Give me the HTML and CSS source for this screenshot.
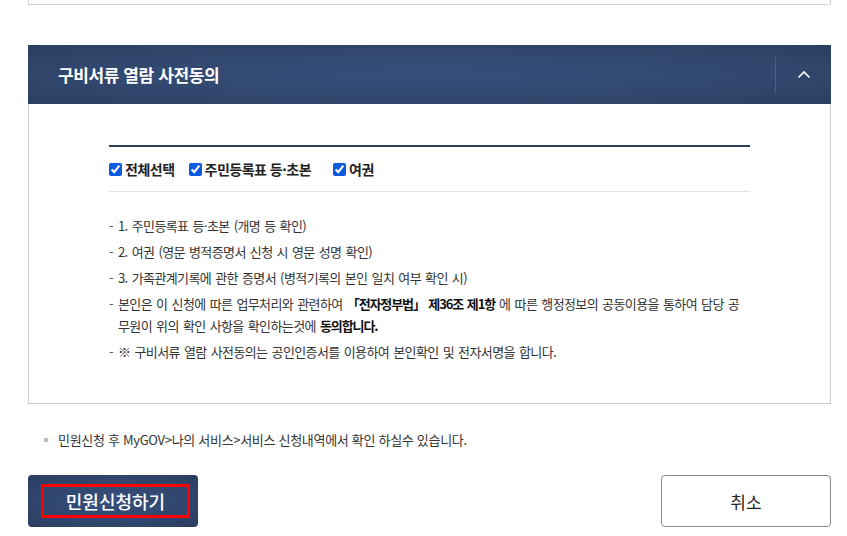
FILE: index.html
```html
<!DOCTYPE html>
<html lang="ko">

<head>
    <meta charset="UTF-8">
    <meta name="viewport" content="width=device-width, initial-scale=1.0">
    <title>구비서류 열람 사전동의</title>
    <link rel="stylesheet" href="styles.css">
</head>

<body>
    <div class="wrap">
        <div class="prev-box"></div>

        <section class="agree">
            <div class="agree-head">
                <h3>구비서류 열람 사전동의</h3>
                <button class="toggle" aria-label="접기">
                    <svg width="14" height="9" viewBox="0 0 14 9">
                        <path d="M1.5 7.5 L7 2 L12.5 7.5" fill="none" stroke="#fff" stroke-width="1.6"/>
                    </svg>
                </button>
            </div>
            <div class="agree-body">
                <div class="agree-inner">
                    <div class="checks">
                        <label><input type="checkbox" checked> 전체선택</label>
                        <label><input type="checkbox" checked> 주민등록표 등·초본</label>
                        <label class="wide"><input type="checkbox" checked> 여권</label>
                    </div>
                    <ul class="docs">
                        <li><span class="dash">-</span><span>1. 주민등록표 등·초본 (개명 등 확인)</span></li>
                        <li><span class="dash">-</span><span>2. 여권 (영문 병적증명서 신청 시 영문 성명 확인)</span></li>
                        <li><span class="dash">-</span><span>3. 가족관계기록에 관한 증명서 (병적기록의 본인 일치 여부 확인 시)</span></li>
                        <li><span class="dash">-</span><span>본인은 이 신청에 따른 업무처리와 관련하여 <b>「전자정부법」 제36조 제1항</b> 에 따른 행정정보의 공동이용을 통하여 담당 공무원이 위의 확인 사항을 확인하는것에 <b>동의합니다.</b></span></li>
                        <li><span class="dash">-</span><span>※ 구비서류 열람 사전동의는 공인인증서를 이용하여 본인확인 및 전자서명을 합니다.</span></li>
                    </ul>
                </div>
            </div>
        </section>

        <p class="note">민원신청 후 MyGOV&gt;나의 서비스&gt;서비스 신청내역에서 확인 하실수 있습니다.</p>

        <div class="actions">
            <button class="btn-apply"><span>민원신청하기</span></button>
            <button class="btn-cancel">취소</button>
        </div>
    </div>
</body>

</html>
```

FILE: styles.css
```css
body {
    margin: 0;
    background: #fff;
    font-family: "Noto Sans CJK KR", "Noto Sans", sans-serif;
    color: #222;
}

.wrap {
    width: 803px;
    margin-left: 28px;
}

.prev-box {
    height: 4px;
    border: 1px solid #d4d4d4;
    border-top: none;
}

.agree {
    margin-top: 40px;
}

.agree-head {
    height: 59px;
    display: flex;
    align-items: center;
    justify-content: space-between;
    background: radial-gradient(ellipse at 50% 50%, #36507b 0%, #31476d 60%, #2c3f62 100%);
}

.agree-head h3 {
    margin: 0 0 0 30px;
    color: #fff;
    font-size: 17px;
    font-weight: 700;
    letter-spacing: -0.4px;
}

.toggle {
    width: 56px;
    height: 36px;
    border: none;
    border-left: 1px solid #4a5f82;
    background: none;
    padding: 0;
    display: flex;
    align-items: center;
    justify-content: center;
}

.agree-body {
    box-sizing: border-box;
    height: 300px;
    padding: 41px 0 0 80px;
    border: 1px solid #ccc;
    border-top: none;
}

.agree-inner {
    width: 641px;
    border-top: 2px solid #2e3d59;
}

.checks {
    display: flex;
    align-items: center;
    height: 44px;
    border-bottom: 1px solid #e3e3e3;
    font-size: 14px;
    font-weight: 700;
    letter-spacing: -0.5px;
    color: #222;
}

.checks label {
    display: flex;
    align-items: center;
    margin-right: 14px;
}

.checks label.wide {
    margin-left: 8px;
}

.checks input {
    width: 13px;
    height: 13px;
    margin: 0 3px 0 0;
    accent-color: #0a5be0;
}

.docs {
    list-style: none;
    margin: 23px 6px 0 0;
    padding: 0;
    font-size: 13px;
    line-height: 22px;
    letter-spacing: -0.6px;
    word-spacing: 1px;
    word-break: break-all;
    color: #333;
}

.docs li {
    display: flex;
    margin-bottom: 4px;
}

.docs .dash {
    flex: none;
    width: 9px;
    color: #555;
}

.docs b {
    color: #111;
    letter-spacing: -1.1px;
}

.note {
    margin: 26px 0 0 16px;
    font-size: 13px;
    letter-spacing: -0.3px;
    color: #333;
    display: flex;
    align-items: center;
}

.note::before {
    content: "";
    width: 4px;
    height: 4px;
    background: #bbb;
    margin-right: 10px;
}

.actions {
    display: flex;
    justify-content: space-between;
    margin-top: 26px;
}

.actions button {
    width: 170px;
    height: 52px;
    border-radius: 4px;
    font-family: inherit;
    font-size: 17px;
    cursor: pointer;
}

.btn-apply {
    background: radial-gradient(ellipse at 50% 50%, #36507b 0%, #2f446a 70%, #2b3d60 100%);
    border: none;
    padding: 9px 8px 9px 13px;
    color: #fff;
    font-size: 18px !important;
    font-weight: 500;
}

.btn-apply span {
    display: flex;
    align-items: center;
    justify-content: center;
    height: 100%;
    border: 3px solid #f00;
    box-sizing: border-box;
}

.btn-cancel {
    background: #fff;
    border: 1px solid #888;
    color: #222;
}
```
